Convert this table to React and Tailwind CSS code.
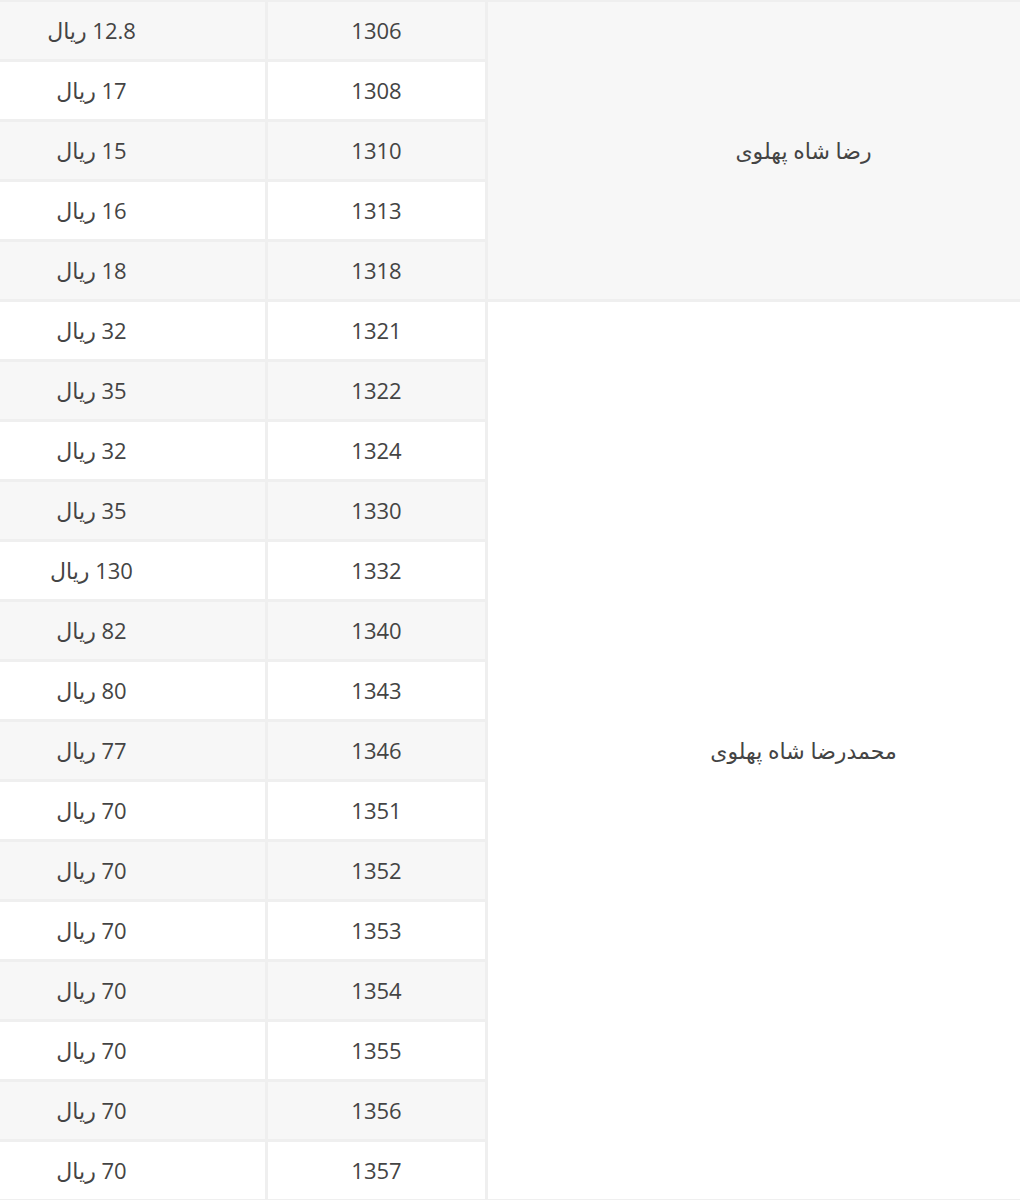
const REZA = [
  ['1306', '12.8'],
  ['1308', '17'],
  ['1310', '15'],
  ['1313', '16'],
  ['1318', '18'],
]

const MOHAMMAD = [
  ['1321', '32'],
  ['1322', '35'],
  ['1324', '32'],
  ['1330', '35'],
  ['1332', '130'],
  ['1340', '82'],
  ['1343', '80'],
  ['1346', '77'],
  ['1351', '70'],
  ['1352', '70'],
  ['1353', '70'],
  ['1354', '70'],
  ['1355', '70'],
  ['1356', '70'],
  ['1357', '70'],
]

const cell = 'border-[3px] border-[#efefef] text-center align-middle h-[60px] p-0'

function Rows({ king, rows }) {
  return rows.map(([year, price], i) => (
    <tr key={year} className="odd:bg-[#f7f7f7] bg-white">
      {i === 0 && (
        <td rowSpan={rows.length} className={`${cell} w-[634px]`}>
          {king}
        </td>
      )}
      <td className={`${cell} w-[220px]`}>{year}</td>
      <td className={`${cell} w-[350px]`}>{price} ریال</td>
    </tr>
  ))
}

export default function App() {
  return (
    <div className="w-[1020px] h-[1200px] overflow-hidden bg-white">
      <table
        dir="rtl"
        className="ml-[-85px] mt-[-1px] w-[1207px] border-collapse text-[22px] text-[#444] font-['Open_Sans','DejaVu_Sans',sans-serif]"
      >
        <tbody>
          <Rows king="رضا شاه پهلوی" rows={REZA} />
          <Rows king="محمدرضا شاه پهلوی" rows={MOHAMMAD} />
        </tbody>
      </table>
    </div>
  )
}
